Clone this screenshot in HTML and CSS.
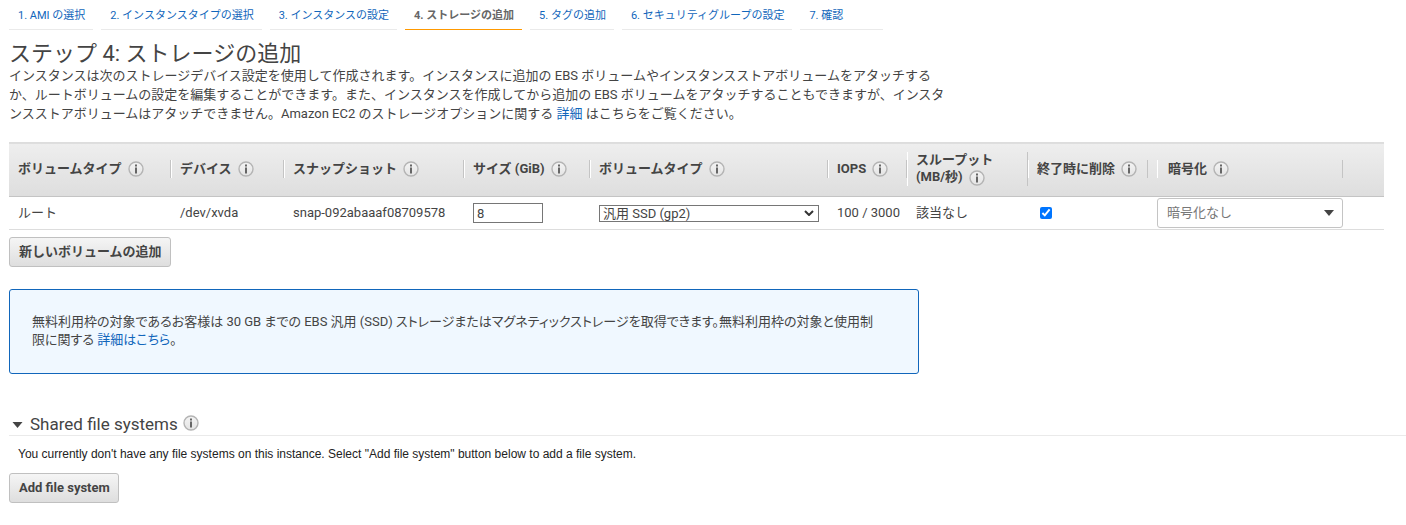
FILE: index.html
```html
<!DOCTYPE html>
<html lang="ja">
<head>
<meta charset="utf-8">
<meta name="viewport" content="width=device-width, initial-scale=1">
<title>ステップ 4: ストレージの追加</title>
<link rel="stylesheet" href="styles.css">
</head>
<body>
<svg class="sprite" aria-hidden="true">
  <defs>
    <linearGradient id="info-fill" x1="0" y1="0" x2="0" y2="1">
      <stop offset="0" stop-color="#f4f4f4"/>
      <stop offset="1" stop-color="#e4e4e4"/>
    </linearGradient>
  </defs>
  <symbol id="info" viewBox="0 0 16 16">
    <circle cx="8" cy="8" r="7" fill="url(#info-fill)" stroke="#b4b4b4" stroke-width="1.4"/>
    <path d="M7.1 3.6h1.8v1.8H7.1zM7.1 6.4h1.8v6H7.1z" fill="#585858"/>
  </symbol>
</svg>

<nav class="steps" aria-label="ウィザードの手順">
  <a class="step" href="#">1. AMI の選択</a>
  <a class="step" href="#">2. インスタンスタイプの選択</a>
  <a class="step" href="#">3. インスタンスの設定</a>
  <a class="step step-current" href="#" aria-current="step">4. ストレージの追加</a>
  <a class="step" href="#">5. タグの追加</a>
  <a class="step" href="#">6. セキュリティグループの設定</a>
  <a class="step step-last" href="#">7. 確認</a>
</nav>

<main class="content">
  <h1 class="title">ステップ 4: ストレージの追加</h1>
  <p class="intro">インスタンスは次のストレージデバイス設定を使用して作成されます。インスタンスに追加の EBS ボリュームやインスタンスストアボリュームをアタッチするか、ルートボリュームの設定を編集することができます。また、インスタンスを作成してから追加の EBS ボリュームをアタッチすることもできますが、インスタンスストアボリュームはアタッチできません。Amazon EC2 のストレージオプションに関する <a class="link" href="#">詳細</a> はこちらをご覧ください。</p>

  <table class="volumes">
    <colgroup>
      <col class="col-kind"><col class="col-device"><col class="col-snapshot"><col class="col-size"><col class="col-type"><col class="col-iops"><col class="col-throughput"><col class="col-delete"><col class="col-encrypt"><col>
    </colgroup>
    <thead>
      <tr>
        <th scope="col"><div class="head">ボリュームタイプ<svg class="info"><use href="#info"/></svg></div></th>
        <th scope="col"><div class="head">デバイス<svg class="info"><use href="#info"/></svg></div></th>
        <th scope="col"><div class="head">スナップショット<svg class="info"><use href="#info"/></svg></div></th>
        <th scope="col"><div class="head" id="size-label">サイズ (GiB)<svg class="info"><use href="#info"/></svg></div></th>
        <th scope="col"><div class="head" id="type-label">ボリュームタイプ<svg class="info"><use href="#info"/></svg></div></th>
        <th scope="col"><div class="head">IOPS<svg class="info"><use href="#info"/></svg></div></th>
        <th scope="col"><div class="head head-tall"><span>スループット<br>(MB/秒)<svg class="info"><use href="#info"/></svg></span></div></th>
        <th scope="col"><div class="head" id="delete-label">終了時に削除<svg class="info"><use href="#info"/></svg></div></th>
        <th scope="col" class="encrypt-head"><div class="head" id="encrypt-label">暗号化<svg class="info"><use href="#info"/></svg></div></th>
        <td></td>
      </tr>
    </thead>
    <tbody>
      <tr>
        <td>ルート</td>
        <td>/dev/xvda</td>
        <td>snap-092abaaaf08709578</td>
        <td><input class="size" type="text" value="8" aria-labelledby="size-label"></td>
        <td><div class="select-wrap"><select class="type" aria-labelledby="type-label"><option>汎用 SSD (gp2)</option></select><svg class="chevron" viewBox="0 0 10 6"><path d="M1 1l4 4 4-4" fill="none" stroke="#333" stroke-width="2"/></svg></div></td>
        <td>100 / 3000</td>
        <td>該当なし</td>
        <td><input class="check" type="checkbox" checked aria-labelledby="delete-label"></td>
        <td class="encrypt-cell"><div class="select-wrap"><select class="encrypt" aria-labelledby="encrypt-label"><option>暗号化なし</option></select><svg class="caret" viewBox="0 0 10 6"><path d="M0 0h10L5 6z" fill="#444"/></svg></div></td>
        <td></td>
      </tr>
    </tbody>
  </table>
  <button class="button" type="button">新しいボリュームの追加</button>

  <p class="notice">無料利用枠の対象であるお客様は 30 GB までの EBS 汎用 (SSD) ストレージまたはマグネティックストレージを取得できます。無料利用枠の対象と使用制<br>限に関する <a class="link" href="#">詳細はこちら</a>。</p>
</main>

<section class="shared">
  <h2 class="shared-title"><svg class="toggle" viewBox="0 0 10 6"><path d="M0 0h10L5 6z" fill="#444"/></svg>Shared file systems<svg class="info info-shared"><use href="#info"/></svg></h2>
  <p class="shared-text">You currently don't have any file systems on this instance. Select "Add file system" button below to add a file system.</p>
  <button class="button" type="button">Add file system</button>
</section>
</body>
</html>
```

FILE: styles.css
```css
* { box-sizing: border-box; }

body {
  margin: 0;
  padding-left: 9px;
  background: #fff;
  color: #444;
  font: 13px/18px Roboto, "Noto Sans CJK JP", sans-serif;
}

.sprite { position: absolute; width: 0; height: 0; }

.link { color: #1166bb; text-decoration: none; }

.steps { display: flex; gap: 8px; }
.step {
  padding: 7px 8px 4px 9px;
  border-bottom: 1px solid #eaeaea;
  color: #1166bb;
  font-size: 11px;
  text-decoration: none;
  white-space: nowrap;
}
.step-current { border-color: #f90; color: #666; font-weight: bold; }
.step-last { min-width: 83px; }

.content { padding-right: 22px; }

.title {
  margin: 11px 0 0;
  font-size: 22px;
  font-weight: normal;
  line-height: 25px;
}

.intro { max-width: 940px; margin: 0; line-height: 19px; }

.volumes {
  width: 100%;
  margin: 19px 0 7px;
  border-collapse: collapse;
  table-layout: fixed;
}
.col-kind { width: 162px; }
.col-device { width: 113px; }
.col-snapshot { width: 180px; }
.col-size { width: 126px; }
.col-type { width: 238px; }
.col-iops { width: 79px; }
.col-throughput { width: 121px; }
.col-delete { width: 120px; }
.col-encrypt { width: 195px; }

.volumes thead {
  border-top: 1px solid #ddd;
  border-bottom: 1px solid #c4c4c4;
  background: linear-gradient(#eee, #dedede);
}
.volumes th { height: 54px; padding: 0 0 2px; text-align: left; }
.head {
  display: flex;
  align-items: center;
  height: 18px;
  padding-left: 8px;
  border-left: 1px solid #fff;
  border-right: 1px solid #c4c4c4;
  white-space: nowrap;
}
.volumes th:first-child .head { border-left-color: transparent; }
.head-tall { height: 34px; line-height: 17px; }
.info { width: 16px; height: 16px; margin-left: 6px; flex: none; vertical-align: middle; }
.encrypt-head .head { margin-left: 9px; padding-left: 10px; }

.volumes tbody tr { border-bottom: 1px solid #ddd; }
.volumes tbody td { height: 33px; padding: 0 0 0 9px; white-space: nowrap; }

.size {
  display: block;
  width: 70px;
  height: 20px;
  padding: 0 3px;
  border: 1px solid #767676;
  color: #444;
  font: inherit;
}
.select-wrap { display: grid; align-items: center; }
.select-wrap > * { grid-area: 1 / 1; }
.select-wrap svg { justify-self: end; pointer-events: none; }
.type, .encrypt { appearance: none; margin: 0; background: #fff; font: inherit; }
.type {
  width: 220px;
  height: 17px;
  padding: 0 3px;
  border: 1px solid #767676;
  border-radius: 0;
  color: #444;
  line-height: 15px;
}
.chevron { width: 10px; height: 6px; margin-right: 14px; }
.check { display: block; width: 12px; height: 12px; margin: 0 3px; }
.encrypt {
  width: 100%;
  height: 30px;
  padding: 0 9px;
  border: 1px solid #c4c4c4;
  border-radius: 3px;
  color: #777;
}
.caret { width: 10px; height: 6px; margin-right: 9px; }

.button {
  display: block;
  height: 30px;
  padding: 0 8px 1px 9px;
  border: 1px solid #c0c0c0;
  border-radius: 3px;
  background: linear-gradient(#f5f5f5, #dedede);
  color: #444;
  font: inherit;
  font-weight: bold;
}

.notice {
  max-width: 910px;
  margin: 22px 0 0;
  padding: 23px 12px 24px 22px;
  border: 1px solid #1166bb;
  border-radius: 3px;
  background: #f0f8ff;
  font-feature-settings: "palt";
  line-height: 18px;
}

.shared { margin-top: 40px; }
.shared-title {
  display: flex;
  align-items: center;
  margin: 0;
  padding-left: 3px;
  border-bottom: 1px solid #eaeaea;
  font-size: 17px;
  font-weight: normal;
  line-height: 21px;
}
.toggle { width: 11px; height: 6px; margin-right: 7px; }
.info-shared { margin: 0 0 4px 5px; }
.shared-text {
  margin: 9px 0 10px;
  padding-left: 9px;
  color: #222;
  font: 12px/18px "Liberation Sans", Arial, sans-serif;
}
```
